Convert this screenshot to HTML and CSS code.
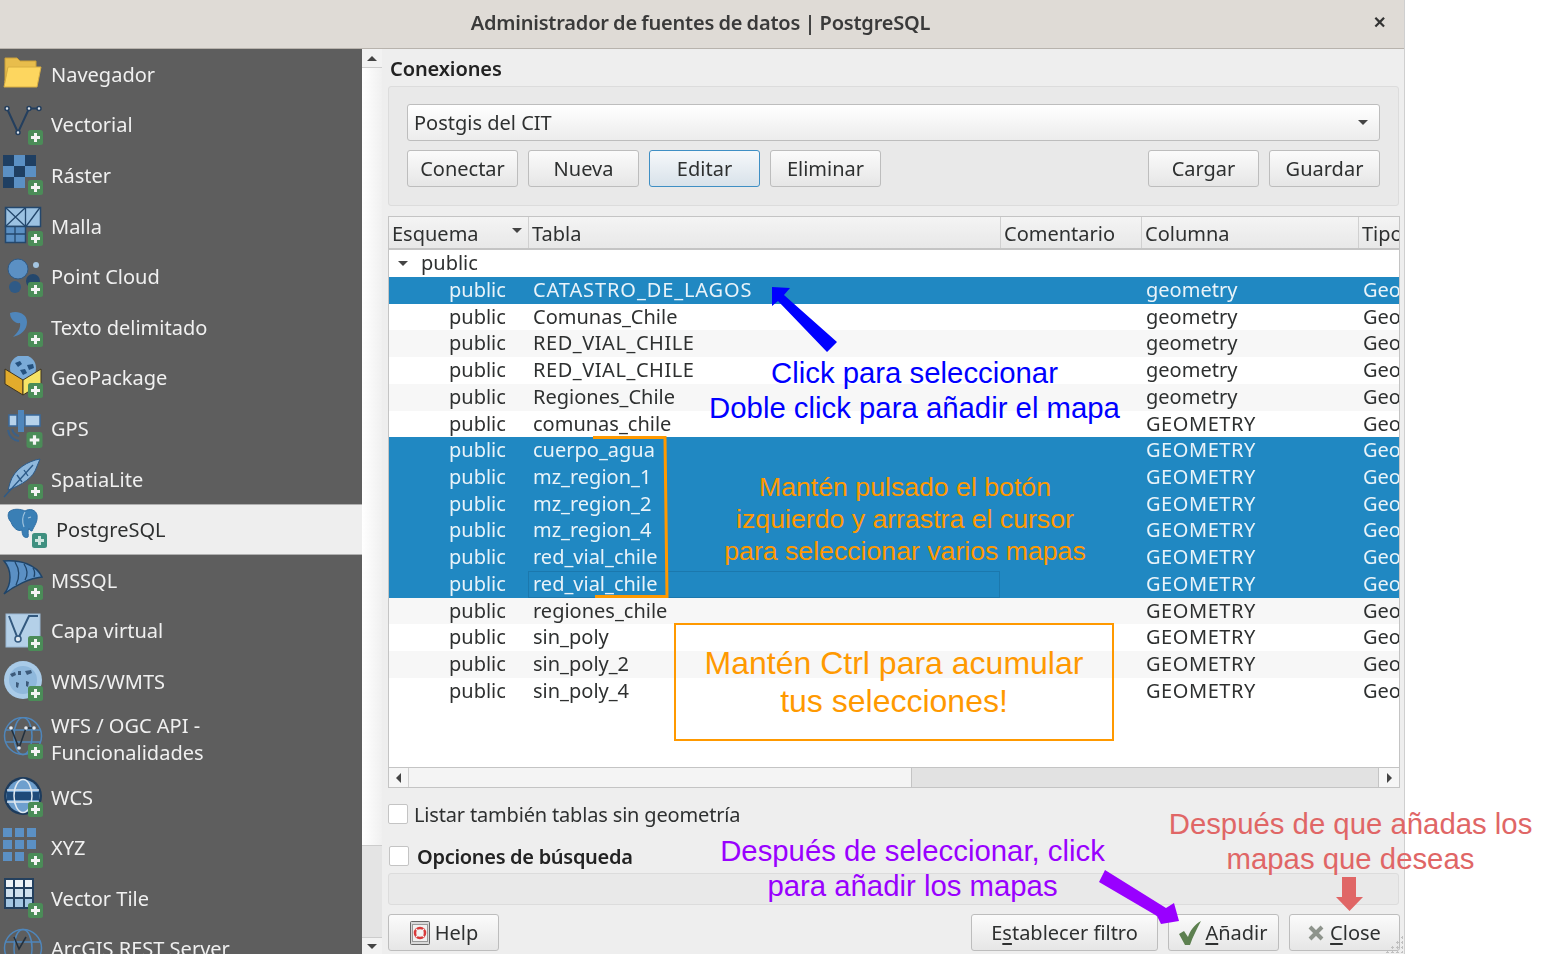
FILE: index.html
```html
<!DOCTYPE html>
<html lang="es">

<head>
    <meta charset="utf-8">
    <title>Administrador de fuentes de datos | PostgreSQL</title>
    <link rel="stylesheet" href="styles.css">
</head>

<body>
    <svg class="defs">
        <symbol id="plus" viewBox="0 0 15 15">
            <rect x="0" y="0" width="15" height="15" rx="2.5" fill="#4b8c58" />
            <path d="M7.5 3v9M3 7.5h9" stroke="#f4f4f4" stroke-width="3" />
        </symbol>
        <symbol id="plus-teal" viewBox="0 0 15 15">
            <rect x="0" y="0" width="15" height="15" rx="2.5" fill="#3f9080" />
            <path d="M7.5 3v9M3 7.5h9" stroke="#cfe6e0" stroke-width="3" />
        </symbol>
    </svg>

    <div class="window">
        <div class="titlebar">
            <span class="title">Administrador de fuentes de datos | PostgreSQL</span>
            <span class="close-x">✕</span>
        </div>

        <div class="content">
            <ul class="sidebar">
                <li class="item">
                    <svg class="icon" viewBox="0 0 48 44">
                        <path d="M5 6h12l3 3h16v7H8L5 30z" fill="#e8bd4c" stroke="#c99f38" />
                        <path d="M8 15h33l-4 20H4z" fill="#fdd65f" stroke="#d8ae42" />
                    </svg>
                    <span>Navegador</span>
                </li>
                <li class="item">
                    <svg class="icon" viewBox="0 0 48 44">
                        <path d="M7 5.500L18 29.500L29 5.500H39" fill="none" stroke="#243f5e" stroke-width="2" />
                        <g fill="#dfe6ee" stroke="#243f5e" stroke-width="1.500">
                            <circle cx="7" cy="5.500" r="2" />
                            <circle cx="18" cy="29.500" r="2" />
                            <circle cx="29" cy="5.500" r="2" />
                            <circle cx="39" cy="5.500" r="2" />
                        </g>
                        <use href="#plus" x="28" y="27" width="15" height="15" />
                    </svg>
                    <span>Vectorial</span>
                </li>
                <li class="item">
                    <svg class="icon" viewBox="0 0 48 44">
                        <path d="M3 2h11v11H3zM25 2h11v11H25zM14 13h11v11H14zM3 24h11v11H3z" fill="#1f3f62" />
                        <path d="M14 2h11v11H14zM3 13h11v11H3zM25 13h11v11H25zM14 24h11v11H14z" fill="#5b90c4" />
                        <use href="#plus" x="28" y="27" width="15" height="15" />
                    </svg>
                    <span>Ráster</span>
                </li>
                <li class="item">
                    <svg class="icon" viewBox="0 0 48 44">
                        <path d="M5.500 3.500h35v19h-35z" fill="#9cc2e2" stroke="#24476c" stroke-width="1.500" />
                        <path d="M5.500 22.500h20v16h-20z" fill="#5b90c4" stroke="#24476c" stroke-width="1.500" />
                        <path d="M5.500 3.500l20 19M25.500 3.500l-20 19M25.500 3.500v19M26 22.500l14-19M5.500 30h20M15 22.500v16" fill="none" stroke="#24476c" stroke-width="1.300" />
                        <use href="#plus" x="28" y="27" width="15" height="15" />
                    </svg>
                    <span>Malla</span>
                </li>
                <li class="item">
                    <svg class="icon" viewBox="0 0 48 44">
                        <circle cx="33" cy="26" r="7" fill="#24476c" />
                        <circle cx="15" cy="32" r="6" fill="#2f5a86" />
                        <circle cx="18" cy="14" r="10" fill="#5b90c4" stroke="#2f5a86" />
                        <circle cx="36" cy="10" r="3" fill="#a5c6e2" />
                        <use href="#plus" x="28" y="27" width="15" height="15" />
                    </svg>
                    <span>Point Cloud</span>
                </li>
                <li class="item">
                    <svg class="icon" viewBox="0 0 48 44">
                        <path d="M10 8C18 5 27 9 27 17C27 25 21 30 13 32C18 27 21 23 20 18C15 19 10 14 10 8z" fill="#4f86bb" />
                        <use href="#plus" x="28" y="27" width="15" height="15" />
                    </svg>
                    <span>Texto delimitado</span>
                </li>
                <li class="item">
                    <svg class="icon" viewBox="0 0 48 44">
                        <circle cx="23" cy="12" r="13" fill="#7aabd8" />
                        <path d="M15 7l5-2 2 3-4 3zM27 9l6-1 1 4-5 2zM20 14l5-1 2 4-4 2z" fill="#25527f" />
                        <path d="M5 13L23 24V39L5 28z" fill="#e2ac2c" stroke="#3e3520" />
                        <path d="M41 13L23 24V39L41 28z" fill="#f6e466" stroke="#3e3520" />
                        <use href="#plus" x="28" y="27" width="15" height="15" />
                    </svg>
                    <span>GeoPackage</span>
                </li>
                <li class="item">
                    <svg class="icon" viewBox="0 0 48 44">
                        <path d="M8 24c1 6 5 10 11 11M12 23c1 4 3 6 7 7" fill="none" stroke="#3a6088" stroke-width="2" />
                        <path d="M9 9h8v11H9zM25 9h15v11H25z" fill="#b6d2ea" stroke="#3a6a9c" stroke-width="1.500" />
                        <path d="M18 4h6v22h-6z" fill="#4f86bb" />
                        <use href="#plus" x="26" y="26" width="17" height="16" />
                    </svg>
                    <span>GPS</span>
                </li>
                <li class="item">
                    <svg class="icon" viewBox="0 0 48 44">
                        <path d="M40 2C28 4 14 12 10 26L8 33C16 30 30 24 35 14z" fill="#8fb8dc" stroke="#2c5a88" />
                        <path d="M33 8L4 40M17 18l5 7M24 13l4 6" fill="none" stroke="#2c5a88" stroke-width="1.300" />
                        <use href="#plus" x="28" y="27" width="15" height="15" />
                    </svg>
                    <span>SpatiaLite</span>
                </li>
                <li class="item active">
                    <svg class="icon" viewBox="0 0 48 44">
                        <path d="M9 4C13 0 21 1 25 3C30 0 36 2 37 7C38 14 34 18 32 23C30 23 29 21 29 20C27 24 29 27 28 29C24 31 22 27 22 22C18 24 13 20 11 14C9 12 7 8 9 4z" fill="#3a7fb5" stroke="#2f6fa5" />
                        <path d="M25 4C22 9 22 14 24 19M31 9l-3 1" fill="none" stroke="#9fc3de" stroke-width="1.200" />
                        <use href="#plus-teal" x="32" y="25" width="15" height="15" />
                    </svg>
                    <span>PostgreSQL</span>
                </li>
                <li class="item">
                    <svg class="icon" viewBox="0 0 48 44">
                        <path d="M4 3C20 2 36 6 42 19C30 20 14 28 4 36C12 26 12 12 4 3z" fill="#5b90c4" stroke="#1f4468" stroke-width="1.500" />
                        <path d="M15 4C20 12 20 19 16 27M24 6C28 12 28 17 25 22M33 10C35 13 35 16 34 19" fill="none" stroke="#1f4468" stroke-width="1.300" />
                        <use href="#plus" x="28" y="27" width="15" height="15" />
                    </svg>
                    <span>MSSQL</span>
                </li>
                <li class="item">
                    <svg class="icon" viewBox="0 0 48 44">
                        <rect x="6" y="5" width="34" height="33" fill="#b4d0e8" stroke="#9ab8d4" />
                        <path d="M9 7L18 30L29 7H38" fill="none" stroke="#33597f" stroke-width="2" />
                        <circle cx="18" cy="30" r="3" fill="#dfe8f0" stroke="#33597f" stroke-width="1.500" />
                        <use href="#plus" x="28" y="27" width="15" height="15" />
                    </svg>
                    <span>Capa virtual</span>
                </li>
                <li class="item">
                    <svg class="icon" viewBox="0 0 48 44">
                        <circle cx="23" cy="21" r="19" fill="#a9cbe8" />
                        <circle cx="23" cy="21" r="14" fill="#8fb8dc" />
                        <path d="M10 15l5-2 1 3-4 2zM18 12l3 0 0 4-3 0zM25 12l6-1 1 3-5 2zM16 23l3 1-1 5-2-1zM26 22l3 1-1 5-2-1z" fill="#3c5a7a" />
                        <use href="#plus" x="28" y="27" width="15" height="15" />
                    </svg>
                    <span>WMS/WMTS</span>
                </li>
                <li class="item tall">
                    <svg class="icon" viewBox="0 0 48 44">
                        <g fill="none" stroke="#4f86bb" stroke-width="1.500">
                            <circle cx="23" cy="19" r="18.500" />
                            <ellipse cx="23" cy="19" rx="9" ry="18.500" />
                            <path d="M5 13h36M5 25h36" />
                        </g>
                        <path d="M11 11L19 31L26 11H34" fill="none" stroke="#22303e" stroke-width="1.500" />
                        <g fill="#e8eef4">
                            <circle cx="11" cy="11" r="1.800" />
                            <circle cx="19" cy="31" r="1.800" />
                            <circle cx="26" cy="11" r="1.800" />
                            <circle cx="34" cy="11" r="1.800" />
                        </g>
                        <use href="#plus" x="28" y="27" width="15" height="15" />
                    </svg>
                    <span>WFS / OGC API -<br>Funcionalidades</span>
                </li>
                <li class="item">
                    <svg class="icon" viewBox="0 0 48 44">
                        <circle cx="23" cy="21" r="19" fill="#1d3b5c" />
                        <circle cx="23" cy="21" r="16.500" fill="#6e9fce" />
                        <path d="M7 17h32v8H7z" fill="#1f4a78" />
                        <g fill="none" stroke="#dfe8f0" stroke-width="1.500">
                            <ellipse cx="23" cy="21" rx="9" ry="16.500" />
                            <path d="M7 15h32M7 27h32" />
                        </g>
                        <use href="#plus" x="28" y="27" width="15" height="15" />
                    </svg>
                    <span>WCS</span>
                </li>
                <li class="item">
                    <svg class="icon" viewBox="0 0 48 44">
                        <path d="M3 2h9v9H3zM15 2h9v9h-9zM27 2h9v9h-9zM3 14h9v9H3zM15 14h9v9h-9zM27 14h9v9h-9zM3 26h9v9H3zM15 26h9v9h-9z" fill="#5b90c4" />
                        <use href="#plus" x="28" y="27" width="15" height="15" />
                    </svg>
                    <span>XYZ</span>
                </li>
                <li class="item">
                    <svg class="icon" viewBox="0 0 48 44">
                        <rect x="4" y="2" width="30" height="31" fill="#24405e" />
                        <path d="M6 4h7v7H6zM15 4h8v7h-8zM25 4h7v7h-7z" fill="#eef3f7" />
                        <path d="M6 13h7v8H6zM15 13h8v8h-8zM25 13h7v8h-7z" fill="#cfe0ee" />
                        <path d="M6 23h7v8H6zM15 23h8v8h-8zM25 23h7v8h-7z" fill="#a4c6e2" />
                        <use href="#plus" x="28" y="27" width="15" height="15" />
                    </svg>
                    <span>Vector Tile</span>
                </li>
                <li class="item">
                    <svg class="icon" viewBox="0 0 48 44">
                        <g fill="none" stroke="#4f86bb" stroke-width="1.500">
                            <circle cx="23" cy="21" r="18.500" />
                            <ellipse cx="23" cy="21" rx="9" ry="18.500" />
                            <path d="M5 15h36" />
                        </g>
                        <path d="M14 10L19 22L26 10" fill="none" stroke="#22303e" stroke-width="1.500" />
                    </svg>
                    <span>ArcGIS REST Server</span>
                </li>
            </ul>

            <div class="rail">
                <div class="rail-btn"><i class="tri up"></i></div>
                <div class="rail-thumb"></div>
                <div class="rail-track"></div>
                <div class="rail-btn end"><i class="tri down"></i></div>
            </div>

            <div class="main">
                <div class="group-title">Conexiones</div>
                <div class="group">
                    <div class="combo">
                        <span>Postgis del CIT</span>
                        <i class="tri down"></i>
                    </div>
                    <div class="btn-row">
                        <button class="btn">Conectar</button>
                        <button class="btn">Nueva</button>
                        <button class="btn focus">Editar</button>
                        <button class="btn">Eliminar</button>
                        <span class="spacer"></span>
                        <button class="btn">Cargar</button>
                        <button class="btn">Guardar</button>
                    </div>
                </div>

                <div class="table">
                    <div class="row head">
                        <div class="cell">Esquema<i class="tri down"></i></div>
                        <div class="cell">Tabla</div>
                        <div class="cell">Comentario</div>
                        <div class="cell">Columna</div>
                        <div class="cell">Tipo</div>
                    </div>
                    <div class="rows">
                        <div class="row parent"><div class="cell"><i class="tri down"></i>public</div></div>
                        <div class="row sel"><div class="cell">public</div><div class="cell caps-wide">CATASTRO_DE_LAGOS</div><div class="cell"></div><div class="cell">geometry</div><div class="cell">Geo</div></div>
                        <div class="row"><div class="cell">public</div><div class="cell">Comunas_Chile</div><div class="cell"></div><div class="cell">geometry</div><div class="cell">Geo</div></div>
                        <div class="row alt"><div class="cell">public</div><div class="cell caps">RED_VIAL_CHILE</div><div class="cell"></div><div class="cell">geometry</div><div class="cell">Geo</div></div>
                        <div class="row"><div class="cell">public</div><div class="cell caps">RED_VIAL_CHILE</div><div class="cell"></div><div class="cell">geometry</div><div class="cell">Geo</div></div>
                        <div class="row alt"><div class="cell">public</div><div class="cell">Regiones_Chile</div><div class="cell"></div><div class="cell">geometry</div><div class="cell">Geo</div></div>
                        <div class="row"><div class="cell">public</div><div class="cell">comunas_chile</div><div class="cell"></div><div class="cell caps">GEOMETRY</div><div class="cell">Geo</div></div>
                        <div class="row sel"><div class="cell">public</div><div class="cell">cuerpo_agua</div><div class="cell"></div><div class="cell caps">GEOMETRY</div><div class="cell">Geo</div></div>
                        <div class="row sel"><div class="cell">public</div><div class="cell">mz_region_1</div><div class="cell"></div><div class="cell caps">GEOMETRY</div><div class="cell">Geo</div></div>
                        <div class="row sel"><div class="cell">public</div><div class="cell">mz_region_2</div><div class="cell"></div><div class="cell caps">GEOMETRY</div><div class="cell">Geo</div></div>
                        <div class="row sel"><div class="cell">public</div><div class="cell">mz_region_4</div><div class="cell"></div><div class="cell caps">GEOMETRY</div><div class="cell">Geo</div></div>
                        <div class="row sel"><div class="cell">public</div><div class="cell">red_vial_chile</div><div class="cell"></div><div class="cell caps">GEOMETRY</div><div class="cell">Geo</div></div>
                        <div class="row sel"><div class="cell">public</div><div class="cell current">red_vial_chile</div><div class="cell"></div><div class="cell caps">GEOMETRY</div><div class="cell">Geo</div></div>
                        <div class="row alt"><div class="cell">public</div><div class="cell">regiones_chile</div><div class="cell"></div><div class="cell caps">GEOMETRY</div><div class="cell">Geo</div></div>
                        <div class="row"><div class="cell">public</div><div class="cell">sin_poly</div><div class="cell"></div><div class="cell caps">GEOMETRY</div><div class="cell">Geo</div></div>
                        <div class="row alt"><div class="cell">public</div><div class="cell">sin_poly_2</div><div class="cell"></div><div class="cell caps">GEOMETRY</div><div class="cell">Geo</div></div>
                        <div class="row"><div class="cell">public</div><div class="cell">sin_poly_4</div><div class="cell"></div><div class="cell caps">GEOMETRY</div><div class="cell">Geo</div></div>
                    </div>
                    <div class="hscroll">
                        <div class="hs-btn first"><i class="tri left"></i></div>
                        <div class="hs-thumb"></div>
                        <div class="hs-track"></div>
                        <div class="hs-btn"><i class="tri right"></i></div>
                    </div>
                </div>

                <label class="check-row"><i class="check"></i>Listar también tablas sin geometría</label>
                <label class="check-row strong"><i class="check"></i>Opciones de búsqueda</label>
                <div class="search-box"></div>

                <div class="btn-row bottom">
                    <button class="btn">
                        <svg class="btn-icon" viewBox="0 0 20 24">
                            <rect x="0.500" y="0.500" width="19" height="23" rx="1" fill="#d8d8d8" stroke="#666" />
                            <rect x="2.500" y="3.500" width="15" height="17" fill="#f0f0f0" stroke="#999" />
                            <circle cx="10" cy="12" r="5" fill="#f4f4f4" stroke="#d83a3a" stroke-width="2.500" />
                            <path d="M6 8l2.500 2.500M14 8l-2.500 2.500M6 16l2.500-2.500M14 16l-2.500-2.500" stroke="#f4f4f4" stroke-width="1.200" />
                        </svg>
                        <span>Help</span>
                    </button>
                    <span class="spacer"></span>
                    <button class="btn wide"><span>E<u>s</u>tablecer filtro</span></button>
                    <button class="btn">
                        <svg class="btn-icon" viewBox="0 0 22 24">
                            <path d="M0 13L5 10L9 16C11 10 15 4 22 0C18 8 14 15 11 24H6z" fill="#5d8050" />
                        </svg>
                        <span><u>A</u>ñadir</span>
                    </button>
                    <button class="btn">
                        <svg class="btn-icon small" viewBox="0 0 16 16">
                            <path d="M2 2l12 12M14 2L2 14" stroke="#8e948c" stroke-width="4" />
                        </svg>
                        <span><u>C</u>lose</span>
                    </button>
                </div>
                <div class="grip"></div>
            </div>
        </div>
    </div>

    <!-- anotaciones encima de la captura -->
    <svg class="arrows" viewBox="0 0 1555 954">
        <path d="M772 287L790 288L784 295L837 342L827 352L778 301L772 306z" fill="#0000ff" />
        <path d="M1105 870L1166 908L1174 903L1179 921L1161 924L1157 916L1099 882z" fill="#9900ff" />
        <path d="M1342 877H1356V897H1363L1349.500 911L1336 897H1342z" fill="#e06666" />
        <path d="M593 437.500H665L667 596.500H595" fill="none" stroke="#ff9900" stroke-width="3" />
    </svg>
    <div class="note blue">Click para seleccionar<br>Doble click para añadir el mapa</div>
    <div class="note orange">Mantén pulsado el botón<br>izquierdo y arrastra el cursor<br>para seleccionar varios mapas</div>
    <div class="note ctrl">Mantén Ctrl para acumular<br>tus selecciones!</div>
    <div class="note purple">Después de seleccionar, click<br>para añadir los mapas</div>
    <div class="note red">Después de que añadas los<br>mapas que deseas</div>
</body>

</html>
```

FILE: styles.css
```css
html, body {
    margin: 0;
    height: 954px;
    overflow: hidden;
    background: #fff;
}

.defs {
    position: absolute;
    width: 0;
    height: 0;
}

.window {
    width: 1404px;
    height: 954px;
    display: flex;
    flex-direction: column;
    border-right: 1px solid #cfcfcf;
    font-family: "Noto Sans", sans-serif;
    font-size: 20px;
    color: #2e3030;
    background: #eeeeee;
    filter: blur(0.5px);
}

.titlebar {
    height: 49px;
    flex: none;
    box-sizing: border-box;
    display: flex;
    align-items: center;
    justify-content: center;
    position: relative;
    background: #dfdbd6;
    border-bottom: 1px solid #b8b3ad;
    padding: 0 3px 4px 0;
}

.title {
    font-weight: 600;
    color: #3a3a3a;
    letter-spacing: -0.2px;
    word-spacing: -0.7px;
}

.close-x {
    position: absolute;
    right: 18px;
    top: 11px;
    font-size: 16px;
    font-weight: 700;
    color: #333;
}

.content {
    flex: 1;
    display: flex;
    min-height: 0;
}

/* lista de la izquierda */
.sidebar {
    width: 362px;
    flex: none;
    margin: 0;
    padding: 0;
    list-style: none;
    background: #5e5e5e;
    color: #f0f0f0;
    overflow: hidden;
}

.item {
    height: 50.6px;
    display: flex;
    align-items: center;
    line-height: 27px;
}

.item.tall {
    height: 65px;
}

.item.active {
    background: #eeeeee;
    color: #2e3030;
    box-sizing: border-box;
    border-top: 1px solid #b0b0b0;
    border-bottom: 1px solid #b0b0b0;
}

.icon {
    width: 48px;
    height: 44px;
    flex: none;
    margin-right: 3px;
}

.item.active .icon {
    margin-right: 8px;
}

.rail {
    width: 20px;
    flex: none;
    display: flex;
    flex-direction: column;
}

.rail-btn {
    height: 19px;
    flex: none;
    display: flex;
    align-items: center;
    justify-content: center;
    border-bottom: 1px solid #cccccc;
    box-sizing: border-box;
    background: #f2f2f2;
}

.rail-btn.end {
    height: 17px;
    border-bottom: 0;
    border-top: 1px solid #cccccc;
}

.rail-thumb {
    height: 777px;
    flex: none;
    background: linear-gradient(to right, #ffffff, #f0f0f0);
}

.rail-track {
    flex: 1;
    background: #e4e4e4;
    border-top: 1px solid #cccccc;
}

.tri {
    display: inline-block;
    width: 0;
    height: 0;
    border-style: solid;
    border-color: transparent;
}

.tri.up {
    border-width: 0 5px 5px;
    border-bottom-color: #444;
}

.tri.down {
    border-width: 5px 5px 0;
    border-top-color: #444;
}

.tri.left {
    border-width: 5px 5px 5px 0;
    border-right-color: #444;
}

.tri.right {
    border-width: 5px 0 5px 5px;
    border-left-color: #444;
}

/* panel principal */
.main {
    flex: 1;
    min-width: 0;
    padding: 0 3px 0 6px;
    display: flex;
    flex-direction: column;
    position: relative;
}

.group-title {
    height: 37px;
    flex: none;
    box-sizing: border-box;
    padding: 6px 0 0 2px;
    font-weight: 600;
    color: #222;
    letter-spacing: -0.1px;
}

.group {
    height: 120px;
    width: 1011px;
    flex: none;
    box-sizing: border-box;
    border: 1px solid #dcdcdc;
    border-radius: 3px;
    background: #e9e9e9;
    padding: 17px 18px 0;
}

.combo {
    height: 37px;
    box-sizing: border-box;
    display: flex;
    align-items: center;
    justify-content: space-between;
    padding: 0 11px 0 6px;
    border: 1px solid #bdbdbd;
    border-radius: 3px;
    background: linear-gradient(#ffffff, #ececec);
}

.btn-row {
    display: flex;
    gap: 10px;
    margin-top: 9px;
}

.spacer {
    flex: 1;
}

.btn {
    width: 111px;
    height: 37px;
    padding: 0;
    flex: none;
    display: flex;
    align-items: center;
    justify-content: center;
    gap: 4px;
    font: inherit;
    color: inherit;
    border: 1px solid #bdbdbd;
    border-radius: 3px;
    background: linear-gradient(#fbfbfb, #e6e6e6);
}

.btn.focus {
    border-color: #3f8fc4;
    background: linear-gradient(#f6f8fa, #d8e2ea);
}

.btn.wide {
    width: 187px;
}

.btn u {
    text-underline-offset: 3px;
}

.btn-icon {
    height: 24px;
    width: 22px;
    flex: none;
}

.btn-icon.small {
    width: 16px;
    height: 16px;
    margin-right: 2px;
}

.table {
    height: 572px;
    width: 1012px;
    flex: none;
    box-sizing: border-box;
    margin-top: 10px;
    display: flex;
    flex-direction: column;
    border: 1px solid #c4c4c4;
    background: #fff;
}

.rows {
    flex: 1;
    min-height: 0;
}

.row {
    display: grid;
    grid-template-columns: 139px 472px 141px 217px 41px;
    height: 26.73px;
    line-height: 26.73px;
    white-space: nowrap;
}

.row.alt {
    background: #f7f7f7;
}

.row.sel {
    background: #2088c2;
    color: #e9f3f9;
}

.row.parent {
    height: 27px;
}

.cell {
    overflow: hidden;
    padding-left: 5px;
}

.cell:first-child {
    padding-left: 60px;
}

.cell.caps {
    letter-spacing: 0.55px;
}

.cell.caps-wide {
    letter-spacing: 0.9px;
}

.cell.current {
    outline: 1px solid #1b78ad;
    outline-offset: -1px;
}

.row.parent .cell {
    padding-left: 9px;
    grid-column: 1 / span 2;
    display: flex;
    align-items: center;
}

.row.parent .tri {
    margin-right: 13px;
}

.row.head {
    height: 33px;
    line-height: 33px;
    flex: none;
    box-sizing: border-box;
    background: linear-gradient(#f4f4f4, #e8e8e8);
    border-bottom: 2px solid #c4c4c4;
}

.row.head .cell {
    padding-left: 3px;
    border-left: 1px solid #d0d0d0;
    position: relative;
}

.row.head .cell:first-child {
    padding-left: 3px;
    border-left: 0;
}

.row.head .tri {
    position: absolute;
    right: 6px;
    top: 11px;
}

.hscroll {
    height: 19px;
    flex: none;
    display: flex;
    border-top: 1px solid #c4c4c4;
}

.hs-btn {
    width: 20px;
    flex: none;
    display: flex;
    align-items: center;
    justify-content: center;
    background: #f6f6f6;
}

.hs-btn.first {
    width: 19px;
}

.hs-thumb {
    width: 502px;
    flex: none;
    background: #f4f4f4;
    border-left: 1px solid #d0d0d0;
}

.hs-track {
    flex: 1;
    background: #e2e2e2;
    border-left: 1px solid #c4c4c4;
    border-right: 1px solid #c4c4c4;
}

.check-row {
    display: flex;
    align-items: center;
    height: 36px;
    margin-top: 8px;
    gap: 6px;
    flex: none;
    letter-spacing: -0.17px;
}

.check-row.strong {
    height: 30px;
    margin-top: 9px;
    padding-left: 1px;
    gap: 8px;
    font-weight: 600;
    color: #222;
    letter-spacing: -0.3px;
}

.check {
    width: 18px;
    height: 18px;
    flex: none;
    border: 1px solid #c4c4c4;
    border-radius: 2px;
    background: #fff;
}

.search-box {
    height: 32px;
    width: 1011px;
    flex: none;
    margin-top: 2px;
    box-sizing: border-box;
    border: 1px solid #dcdcdc;
    border-radius: 3px;
    background: #e9e9e9;
}

.btn-row.bottom {
    width: 1012px;
    margin-top: 9px;
}

.grip {
    position: absolute;
    right: 1px;
    bottom: 1px;
    width: 18px;
    height: 18px;
    background-image: radial-gradient(#c0c0c0 1px, transparent 1.2px);
    background-size: 5px 5px;
    clip-path: polygon(100% 0, 100% 100%, 0 100%);
}

/* anotaciones */
.arrows {
    position: absolute;
    left: 0;
    top: 0;
    width: 1555px;
    height: 954px;
    pointer-events: none;
}

.note {
    position: absolute;
    font-family: "Liberation Sans", Arial, sans-serif;
    text-align: center;
    white-space: nowrap;
    transform: translateX(-50%);
}

.note.blue {
    left: 914.5px;
    top: 355px;
    font-size: 29.33px;
    line-height: 35px;
    color: #0000ff;
}

.note.orange {
    left: 905px;
    top: 471px;
    font-size: 26.67px;
    line-height: 32px;
    color: #ff9900;
}

.note.ctrl {
    left: 674px;
    top: 623px;
    width: 440px;
    height: 118px;
    box-sizing: border-box;
    padding-top: 19px;
    transform: none;
    border: 2px solid #ff9900;
    font-size: 32px;
    line-height: 38px;
    color: #ff9900;
}

.note.purple {
    left: 912.5px;
    top: 833px;
    font-size: 29.33px;
    line-height: 35px;
    color: #9900ff;
}

.note.red {
    left: 1350.5px;
    top: 806px;
    font-size: 29.33px;
    line-height: 35px;
    color: #e06666;
}
```
